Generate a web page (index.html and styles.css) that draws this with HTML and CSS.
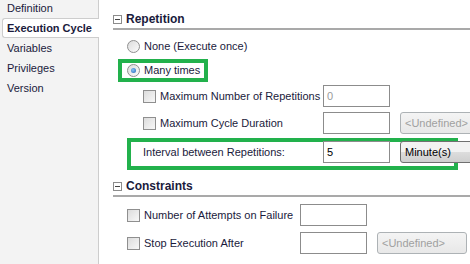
FILE: index.html
```html
<html>

<head>
    <meta charset="UTF-8">
    <link rel="stylesheet" href="styles.css">
</head>

<body>
    <div class="window">
        <div class="tabs">
            <ul>
                <li>Definition</li>
                <li class="active">Execution Cycle</li>
                <li>Variables</li>
                <li>Privileges</li>
                <li>Version</li>
            </ul>
        </div>
        <div class="page">
            <div class="group-head"><span class="toggle"></span>Repetition</div>

            <div class="row row-none">
                <label class="opt"><span class="radio"></span>None (Execute once)</label>
            </div>
            <div class="row row-many">
                <label class="opt mark"><span class="radio on"></span>Many times</label>
            </div>
            <div class="row row-maxnum">
                <label class="opt sub"><span class="check"></span>Maximum Number of Repetitions</label>
                <div class="field off">0</div>
            </div>
            <div class="row row-maxdur">
                <label class="opt sub"><span class="check"></span>Maximum Cycle Duration</label>
                <div class="field"></div>
                <div class="drop off">&lt;Undefined&gt;</div>
            </div>
            <div class="row row-interval">
                <label class="opt">Interval between Repetitions:</label>
                <div class="field">5</div>
                <div class="drop">Minute(s)</div>
            </div>

            <div class="group-head second"><span class="toggle"></span>Constraints</div>

            <div class="row row-attempts">
                <label class="opt"><span class="check"></span>Number of Attempts on Failure</label>
                <div class="field"></div>
            </div>
            <div class="row row-stop">
                <label class="opt"><span class="check"></span>Stop Execution After</label>
                <div class="field"></div>
                <div class="drop off">&lt;Undefined&gt;</div>
            </div>
        </div>
    </div>
</body>

</html>
```

FILE: styles.css
```css
body {
    margin: 0;
    font-family: "Liberation Sans", Arial, sans-serif;
    font-size: 11px;
    color: #1a1a3c;
}

.window {
    display: flex;
    width: 470px;
    height: 264px;
    overflow: hidden;
    background-color: #fff;
}

/* left tab list */

.tabs {
    flex: none;
    width: 98px;
    background-color: #f3f3f3;
    border-right: 1px solid #cdcdcd;
}

.tabs ul {
    margin: -2px 0 0 0;
    padding: 0;
    list-style: none;
}

.tabs li {
    height: 20px;
    line-height: 20px;
    padding-left: 7px;
    white-space: nowrap;
}

.tabs li.active {
    position: relative;
    margin: 0 -1px 0 2px;
    padding-left: 4px;
    height: 18px;
    line-height: 18px;
    font-weight: bold;
    background-color: #fff;
    border: 1px solid #cdcdcd;
    border-right: none;
    border-radius: 3px 0 0 3px;
}

/* right page */

.page {
    flex: 1;
    min-width: 0;
    padding-left: 14px;
}

.group-head {
    display: flex;
    align-items: center;
    height: 18px;
    margin-top: 10px;
    border-bottom: 2px solid #a9a9a9;
    font-size: 12px;
    font-weight: bold;
    white-space: nowrap;
}

.group-head.second {
    margin-top: 7px;
}

.toggle {
    position: relative;
    flex: none;
    width: 7px;
    height: 7px;
    margin-right: 4px;
    border: 1px solid #8c8c8c;
    background-color: #fff;
}

.toggle::after {
    content: "";
    position: absolute;
    left: 1px;
    top: 3px;
    width: 5px;
    height: 1px;
    background-color: #444;
}

.row {
    display: flex;
    align-items: center;
    white-space: nowrap;
}

.opt {
    display: flex;
    align-items: center;
    flex: none;
    box-sizing: border-box;
    gap: 4px;
}

.row-none {
    margin-top: 4px;
    height: 24px;
    padding-left: 14px;
}

.row-many {
    height: 24px;
    padding-left: 9px;
}

.opt.mark {
    height: 15px;
    padding: 0 4px 0 5px;
    outline: 4px solid #22b14c;
}

.row-maxnum {
    height: 28px;
}

.row-maxdur {
    height: 26px;
}

.opt.sub {
    width: 210px;
    padding-left: 30px;
}

.row-interval {
    box-sizing: border-box;
    width: 331px;
    height: 32px;
    margin: 2px 0 0 14px;
    padding-bottom: 4px;
    border: 4px solid #22b14c;
}

.row-interval .opt {
    width: 192px;
    padding-left: 12px;
}

.row-attempts,
.row-stop {
    height: 28px;
}

.row-attempts {
    margin-top: 4px;
}

.row-attempts .opt,
.row-stop .opt {
    width: 187px;
    padding-left: 14px;
}

.radio {
    flex: none;
    box-sizing: border-box;
    width: 13px;
    height: 13px;
    border: 1px solid #8f8f8f;
    border-radius: 50%;
    background: linear-gradient(135deg, #dcdcdc, #fbfbfb);
    display: flex;
    align-items: center;
    justify-content: center;
}

.radio.on::after {
    content: "";
    width: 5px;
    height: 5px;
    border-radius: 50%;
    background: radial-gradient(circle at 40% 40%, #8ac4f4, #1d62b8);
}

.check {
    flex: none;
    box-sizing: border-box;
    width: 13px;
    height: 13px;
    border: 1px solid #8f8f8f;
    background: linear-gradient(135deg, #dcdcdc, #f8f8f8);
}

.field {
    flex: none;
    box-sizing: border-box;
    width: 67px;
    height: 22px;
    line-height: 20px;
    padding-left: 3px;
    border: 1px solid #8c8c8c;
    background-color: #fff;
    color: #000;
}

.field.off {
    color: #9a9a9a;
}

.drop {
    flex: none;
    box-sizing: border-box;
    width: 90px;
    height: 22px;
    line-height: 20px;
    margin-left: 10px;
    padding-left: 4px;
    border: 1px solid #707070;
    border-radius: 3px;
    background: linear-gradient(#f2f2f2 50%, #dddddd 50%, #cfcfcf);
    color: #000;
}

.drop.off {
    border-color: #adb2b5;
    background: linear-gradient(#f4f4f4, #e8e8e8);
    color: #a0a0a0;
}
```
